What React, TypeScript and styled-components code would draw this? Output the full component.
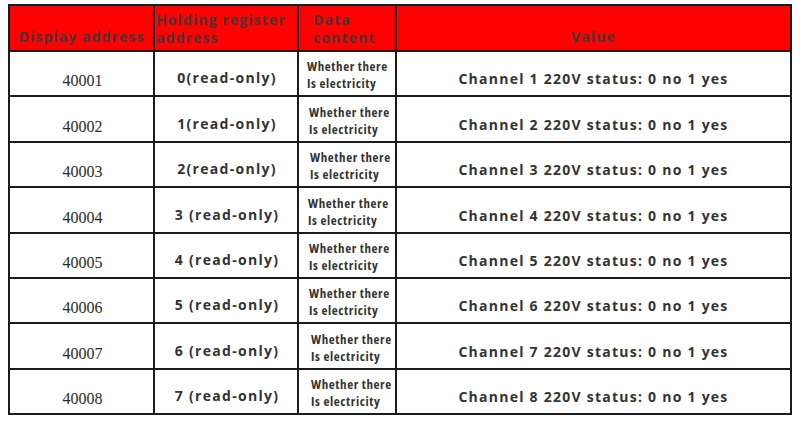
import styled, { createGlobalStyle } from 'styled-components'

const GlobalStyle = createGlobalStyle`
  body {
    margin: 0;
    background: #ffffff;
  }
`

const Page = styled.div`
  width: 800px;
  height: 421px;
  padding: 4px 0 0 8px;
  box-sizing: border-box;
`

const Table = styled.div`
  width: 784px;
  display: grid;
  grid-template-columns: 145px 144px 98px 1fr;
  grid-template-rows: 46px repeat(8, 45.4px);
  border-left: 2px solid #1c1c1c;
  border-top: 2px solid #1c1c1c;
  box-sizing: border-box;
`

const Cell = styled.div`
  border-right: 2px solid #1c1c1c;
  border-bottom: 2px solid #1c1c1c;
  box-sizing: border-box;
  display: flex;
  min-width: 0;
  overflow: hidden;
`

const HeadCell = styled(Cell)<{ $place: 'bottom' | 'top' | 'center'; $left?: number }>`
  background: #ff0000;
  color: #4f3434;
  font-family: 'Open Sans', 'Liberation Sans', sans-serif;
  font-weight: 700;
  font-size: 14px;
  letter-spacing: 1.1px;
  line-height: 18px;
  white-space: nowrap;
  align-items: ${(p) => (p.$place === 'top' ? 'flex-start' : 'flex-end')};
  justify-content: ${(p) => (p.$left !== undefined ? 'flex-start' : 'center')};
  padding: ${(p) =>
    p.$place === 'top'
      ? `5px 0 0 ${p.$left ?? 0}px`
      : p.$place === 'center'
        ? '0 0 4px 0'
        : `0 0 4px ${p.$left ?? 0}px`};
`

const AddressCell = styled(Cell)`
  align-items: flex-end;
  justify-content: center;
  padding: 0 0 5px 2px;
  font-family: 'Liberation Serif', 'Times New Roman', serif;
  font-size: 16px;
  color: #2a2a2a;
`

const RegisterCell = styled(Cell)`
  align-items: flex-end;
  justify-content: center;
  padding: 0 0 8px 2px;
  font-family: 'Open Sans', 'Liberation Sans', sans-serif;
  font-weight: 700;
  font-size: 14px;
  letter-spacing: 1.3px;
  color: #333333;
`

const ContentCell = styled(Cell)<{ $shift: number }>`
  flex-direction: column;
  justify-content: flex-end;
  padding: 0 0 3px ${(p) => 8 + p.$shift}px;
  font-family: 'Open Sans', 'Liberation Sans', sans-serif;
  font-stretch: 85%;
  font-weight: 700;
  font-size: 13px;
  line-height: 17px;
  letter-spacing: 0.6px;
  color: #333333;
  white-space: nowrap;
`

const ValueCell = styled(Cell)`
  align-items: flex-end;
  justify-content: center;
  padding: 0 0 7px 0;
  font-family: 'Open Sans', 'Liberation Sans', sans-serif;
  font-weight: 700;
  font-size: 14px;
  letter-spacing: 1.25px;
  color: #333333;
`

const rows = [
  { addr: '40001', reg: '0(read-only)', ch: 1, shift: 0 },
  { addr: '40002', reg: '1(read-only)', ch: 2, shift: 2 },
  { addr: '40003', reg: '2(read-only)', ch: 3, shift: 3 },
  { addr: '40004', reg: '3 (read-only)', ch: 4, shift: 1 },
  { addr: '40005', reg: '4 (read-only)', ch: 5, shift: 2 },
  { addr: '40006', reg: '5 (read-only)', ch: 6, shift: 2 },
  { addr: '40007', reg: '6 (read-only)', ch: 7, shift: 4 },
  { addr: '40008', reg: '7 (read-only)', ch: 8, shift: 4 },
]

function App() {
  return (
    <Page>
      <GlobalStyle />
      <Table>
        <HeadCell $place="bottom">Display address</HeadCell>
        <HeadCell $place="top" $left={1}>
          Holding register
          <br />
          address
        </HeadCell>
        <HeadCell $place="top" $left={14}>
          Data
          <br />
          content
        </HeadCell>
        <HeadCell $place="center">Value</HeadCell>
        {rows.map((r) => (
          <>
            <AddressCell key={r.addr + 'a'}>{r.addr}</AddressCell>
            <RegisterCell key={r.addr + 'r'}>{r.reg}</RegisterCell>
            <ContentCell key={r.addr + 'c'} $shift={r.shift}>
              <span>Whether there</span>
              <span>Is electricity</span>
            </ContentCell>
            <ValueCell key={r.addr + 'v'}>Channel {r.ch} 220V status: 0 no 1 yes</ValueCell>
          </>
        ))}
      </Table>
    </Page>
  )
}

export default App
